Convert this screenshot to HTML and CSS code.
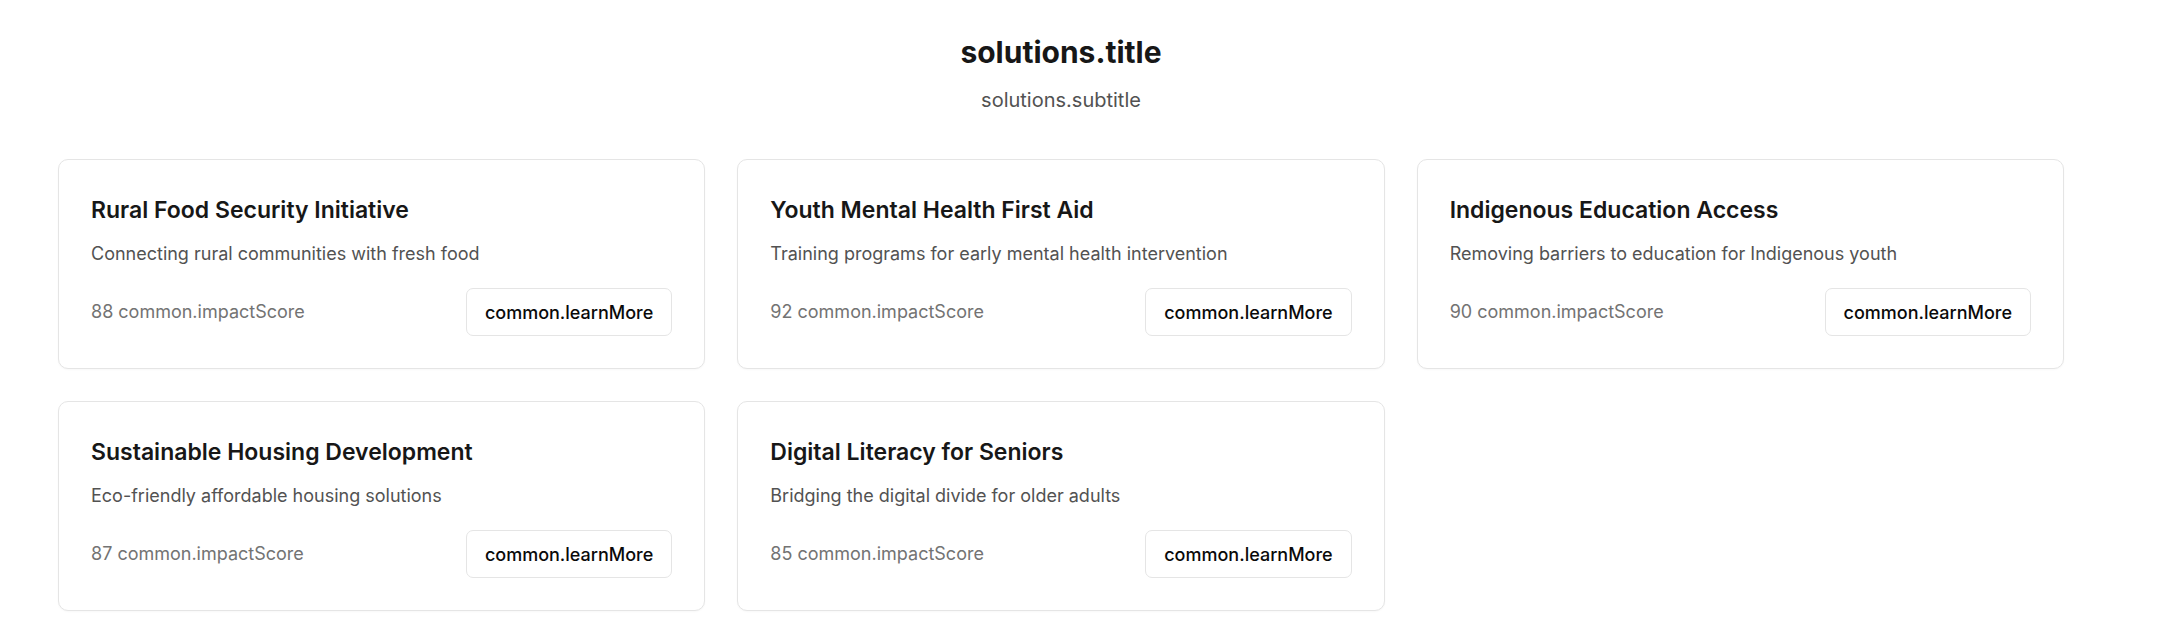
FILE: index.html
```html
<!DOCTYPE html>
<html lang="en">
<head>
<meta charset="utf-8">
<title>Solutions</title>
<link rel="stylesheet" href="styles.css">
</head>
<body>
<section class="page">
  <header class="intro">
    <h1 class="intro-title">solutions.title</h1>
    <p class="intro-subtitle">solutions.subtitle</p>
  </header>
  <div class="grid">
    <article class="card">
      <h3 class="card-title">Rural Food Security Initiative</h3>
      <p class="card-desc">Connecting rural communities with fresh food</p>
      <div class="card-footer">
        <span class="score">88 common.impactScore</span>
        <button class="btn">common.learnMore</button>
      </div>
    </article>
    <article class="card">
      <h3 class="card-title">Youth Mental Health First Aid</h3>
      <p class="card-desc">Training programs for early mental health intervention</p>
      <div class="card-footer">
        <span class="score">92 common.impactScore</span>
        <button class="btn">common.learnMore</button>
      </div>
    </article>
    <article class="card">
      <h3 class="card-title">Indigenous Education Access</h3>
      <p class="card-desc">Removing barriers to education for Indigenous youth</p>
      <div class="card-footer">
        <span class="score">90 common.impactScore</span>
        <button class="btn">common.learnMore</button>
      </div>
    </article>
    <article class="card">
      <h3 class="card-title">Sustainable Housing Development</h3>
      <p class="card-desc">Eco-friendly affordable housing solutions</p>
      <div class="card-footer">
        <span class="score">87 common.impactScore</span>
        <button class="btn">common.learnMore</button>
      </div>
    </article>
    <article class="card">
      <h3 class="card-title">Digital Literacy for Seniors</h3>
      <p class="card-desc">Bridging the digital divide for older adults</p>
      <div class="card-footer">
        <span class="score">85 common.impactScore</span>
        <button class="btn">common.learnMore</button>
      </div>
    </article>
  </div>
</section>
</body>
</html>
```

FILE: styles.css
```css
* { box-sizing: border-box; }

html, body {
  margin: 0;
  padding: 0;
  background: #ffffff;
}

body {
  font-family: Inter, "Noto Sans", "Liberation Sans", sans-serif;
  color: #171717;
}

.page {
  padding: 34px 106px 40px 58px;
}

.intro {
  text-align: center;
}

.intro-title {
  margin: 0;
  font-size: 30px;
  line-height: 36px;
  font-weight: 700;
  color: #171717;
}

.intro-subtitle {
  margin: 16px 0 0;
  font-size: 20px;
  line-height: 28px;
  color: #525252;
}

.grid {
  margin-top: 45px;
  display: grid;
  grid-template-columns: repeat(3, 1fr);
  gap: 32px;
}

.card {
  border: 1px solid #e5e5e5;
  border-radius: 10px;
  background: #fff;
  padding: 36px 32px 32px;
  box-shadow: 0 1px 2px rgba(0, 0, 0, 0.03);
}

.card-title {
  margin: 0;
  font-size: 23px;
  line-height: 28px;
  font-weight: 600;
  color: #171717;
}

.card-desc {
  margin: 16px 0 0;
  font-size: 18px;
  line-height: 28px;
  color: #525252;
}

.card-footer {
  margin-top: 20px;
  display: flex;
  align-items: center;
  justify-content: space-between;
}

.score {
  font-size: 18px;
  line-height: 28px;
  color: #737373;
}

.btn {
  height: 48px;
  padding: 0 18px;
  border: 1px solid #e5e5e5;
  border-radius: 7px;
  background: #fff;
  font-family: inherit;
  font-size: 18px;
  font-weight: 500;
  color: #0a0a0a;
}
```
